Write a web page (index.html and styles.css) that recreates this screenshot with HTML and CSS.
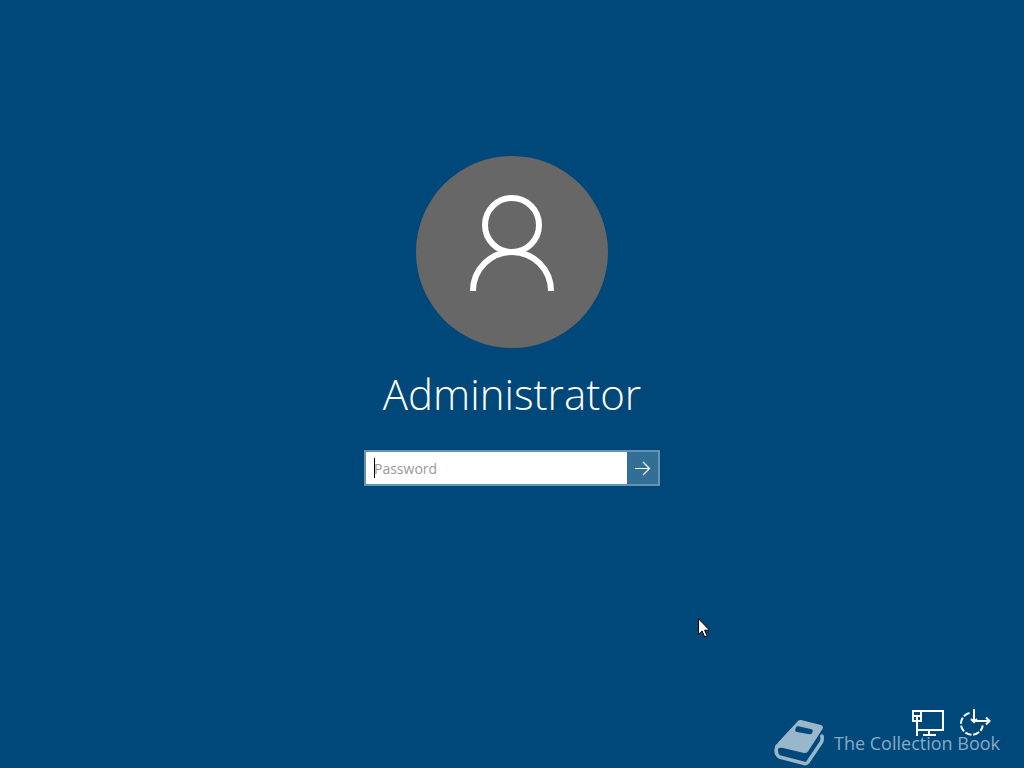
FILE: index.html
```html
<!DOCTYPE html>
<html lang="en">
<head>
    <meta charset="UTF-8">
    <meta name="viewport" content="width=device-width, initial-scale=1.0">
    <title>Sign in</title>
    <link rel="stylesheet" href="styles.css">
</head>
<body>
    <main class="login">
        <div class="avatar">
            <svg viewBox="0 0 192 192" fill="none" stroke="#fff" stroke-width="6">
                <circle cx="96" cy="69" r="27"/>
                <path d="M57 135a39 39 0 0 1 78 0"/>
            </svg>
        </div>
        <h1 class="user-name">Administrator</h1>
        <form class="password-form">
            <input type="password" class="password-input" placeholder="Password" aria-label="Password">
            <span class="caret"></span>
            <button type="button" class="submit-btn" aria-label="Submit">
                <svg width="16" height="16" viewBox="0 0 16 16" fill="none" stroke="#fff" stroke-width="1.2">
                    <path d="M0 8.5h14.500M8 2l6.500 6.500L8 15"/>
                </svg>
            </button>
        </form>
    </main>

    <footer class="tray">
        <button type="button" class="tray-btn" aria-label="Network">
            <svg width="32" height="28" viewBox="0 0 32 28" fill="none" stroke="#fff" stroke-width="2">
                <path d="M9 1h22v19H6"/>
                <path d="M17 20v5M11 25h13"/>
                <path d="M1 1h8v10H1zM5 6v20"/>
                <path d="M2 6h6"/>
            </svg>
        </button>
        <button type="button" class="tray-btn" aria-label="Ease of access">
            <svg width="32" height="28" viewBox="0 0 32 28" fill="none" stroke="#fff" stroke-width="2">
                <path d="M9.500 3A11 11 0 1 0 22.800 15.500" stroke-dasharray="6.500 1.800"/>
                <path d="M14 -1v12.500M11 9l3 3 3-3"/>
                <path d="M16 11h13M26 7.500l3.500 3.500-3.500 3.500"/>
            </svg>
        </button>
    </footer>

    <div class="watermark">
        <svg class="book" width="52" height="48" viewBox="0 0 52 48">
            <path fill="currentColor" fill-rule="evenodd" d="M23 3Q24.500 0.500 27 1L47 6Q50 7 48.500 10L34 32.500Q32.500 34.500 30 34L9 29Q4 28 2 32Q0.500 28 4 23.500ZM22 8.500Q20 12.500 23 13L35.500 15.300Q37.300 15.500 38 14.200Q39.700 10.700 37.500 10.300L24.500 7.300Q22.700 7 22 8.500Z"/>
            <path fill="none" stroke="currentColor" stroke-width="3.600" stroke-linecap="round" stroke-linejoin="round" d="M3 27Q0.500 35 5.500 38L30.500 44.500Q32.500 45 34 43L47.500 23Q48.500 21 48 17"/>
        </svg>
        <span>The Collection Book</span>
    </div>

    <svg class="pointer" width="12" height="20" viewBox="0 0 12 20">
        <path fill="#fff" stroke="#000" d="M0.500 0.800v15.700l3.600-3.500 2.600 6 2.500-1-2.600-5.800h5z"/>
    </svg>
</body>
</html>
```
FILE: styles.css
```css
* {
    box-sizing: border-box;
}

body, html {
    margin: 0;
    padding: 0;
    height: 100%;
}

body {
    position: relative;
    overflow: hidden;
    background-color: #004879;
    color: #fff;
    font-family: "Open Sans", "Noto Sans", sans-serif;
}

.login {
    display: flex;
    flex-direction: column;
    align-items: center;
    padding-top: 156px;
}

.avatar {
    width: 192px;
    height: 192px;
    border-radius: 50%;
    background-color: #676767;
}

.avatar svg {
    display: block;
}

.user-name {
    margin: 16px 0 26px;
    font-size: 42px;
    font-weight: 300;
    line-height: 60px;
}

.password-form {
    position: relative;
    display: flex;
    width: 296px;
    height: 36px;
    border: 2px solid #6692b3;
}

.password-input {
    flex: 1;
    min-width: 0;
    padding: 0 8px;
    border: none;
    border-radius: 0;
    outline: none;
    background-color: #fff;
    color: #000;
    font-family: inherit;
    font-size: 14px;
}

.password-input::placeholder {
    color: #999;
}

.caret {
    position: absolute;
    top: 6px;
    left: 8px;
    width: 1px;
    height: 20px;
    background-color: #000;
}

.submit-btn {
    display: flex;
    align-items: center;
    justify-content: center;
    width: 31px;
    padding: 0;
    border: none;
    background-color: #336e96;
    cursor: pointer;
}

.tray {
    position: absolute;
    right: 32px;
    bottom: 30px;
    display: flex;
    gap: 16px;
}

.tray-btn {
    padding: 0;
    border: none;
    background: none;
    cursor: pointer;
}

.tray-btn svg {
    display: block;
    overflow: visible;
}

.watermark {
    position: absolute;
    right: 24px;
    bottom: 1px;
    display: flex;
    align-items: center;
    gap: 8px;
    color: #99b7cb;
    font-size: 18px;
    line-height: 24px;
    white-space: nowrap;
}

.watermark span {
    color: #86abc5;
}

.pointer {
    position: absolute;
    top: 618px;
    left: 698px;
}
```
